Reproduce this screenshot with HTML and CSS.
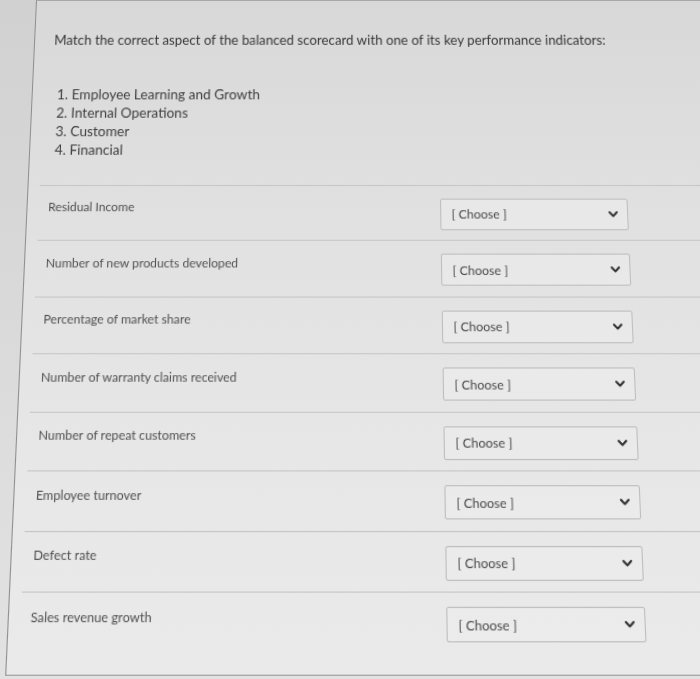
FILE: index.html
```html
<!DOCTYPE html>
<html lang="en">
<head>
<meta charset="utf-8">
<title>Balanced scorecard matching</title>
<link rel="stylesheet" href="styles.css">
</head>
<body>
<div class="stage">
  <div class="card">
    <p class="question">Match the correct aspect of the balanced scorecard with one of its key performance indicators:</p>
    <ol class="aspects">
      <li>Employee Learning and Growth</li>
      <li>Internal Operations</li>
      <li>Customer</li>
      <li>Financial</li>
    </ol>
    <div class="rows">
      <div class="row"><span class="label">Residual Income</span><div class="select"><span>[ Choose ]</span><svg class="chev" viewBox="0 0 9 6" width="9" height="6"><polyline points="1,1 4.5,4.6 8,1"/></svg></div></div>
      <div class="row"><span class="label">Number of new products developed</span><div class="select"><span>[ Choose ]</span><svg class="chev" viewBox="0 0 9 6" width="9" height="6"><polyline points="1,1 4.5,4.6 8,1"/></svg></div></div>
      <div class="row"><span class="label">Percentage of market share</span><div class="select"><span>[ Choose ]</span><svg class="chev" viewBox="0 0 9 6" width="9" height="6"><polyline points="1,1 4.5,4.6 8,1"/></svg></div></div>
      <div class="row"><span class="label">Number of warranty claims received</span><div class="select"><span>[ Choose ]</span><svg class="chev" viewBox="0 0 9 6" width="9" height="6"><polyline points="1,1 4.5,4.6 8,1"/></svg></div></div>
      <div class="row"><span class="label">Number of repeat customers</span><div class="select"><span>[ Choose ]</span><svg class="chev" viewBox="0 0 9 6" width="9" height="6"><polyline points="1,1 4.5,4.6 8,1"/></svg></div></div>
      <div class="row"><span class="label">Employee turnover</span><div class="select"><span>[ Choose ]</span><svg class="chev" viewBox="0 0 9 6" width="9" height="6"><polyline points="1,1 4.5,4.6 8,1"/></svg></div></div>
      <div class="row"><span class="label">Defect rate</span><div class="select"><span>[ Choose ]</span><svg class="chev" viewBox="0 0 9 6" width="9" height="6"><polyline points="1,1 4.5,4.6 8,1"/></svg></div></div>
      <div class="row"><span class="label">Sales revenue growth</span><div class="select"><span>[ Choose ]</span><svg class="chev" viewBox="0 0 9 6" width="9" height="6"><polyline points="1,1 4.5,4.6 8,1"/></svg></div></div>
    </div>
  </div>
</div>
</body>
</html>
```
FILE: styles.css
```css
html, body {
  margin: 0;
  padding: 0;
  width: 700px;
  height: 679px;
  overflow: hidden;
}

body {
  background: linear-gradient(180deg, #d1d1d1 0%, #dcdcdc 60%, #e2e2e2 100%);
}

.stage {
  width: 760px;
  transform-origin: 337px 0;
  transform: perspective(1000px) rotateX(8.63deg);
  font-family: Lato, "Open Sans", sans-serif;
}

.card {
  margin-left: 36px;
  width: 720px;
  box-sizing: border-box;
  border: 1px solid #a8a8a8;
  border-left-color: #8e8e8e;
  border-right: none;
  background: linear-gradient(180deg, #d8d8d8 0%, #e1e1e1 35%, #e7e7e7 70%, #eaeaea 100%);
  padding: 30.7px 0 17px 0;
}

.question {
  margin: 0;
  padding-left: 19px;
  font-size: 13.25px;
  line-height: 17px;
  color: #383838;
}

.aspects {
  margin: 36px 0 0 0;
  padding-left: 24px;
  list-style-position: inside;
  font-size: 13.5px;
  line-height: 18px;
  color: #404040;
}

.rows {
  margin: 25.3px 0 0 11px;
}

.row {
  display: flex;
  align-items: flex-start;
  border-top: 1px solid #c6c6c6;
  padding: 12px 0 9.5px 9px;
}

.label {
  width: 380px;
  flex: none;
  margin-top: 0.5px;
  font-size: 11.75px;
  line-height: 15px;
  color: #505050;
}

.select {
  width: 182px;
  height: 30px;
  box-sizing: border-box;
  border: 1px solid #bdbdbd;
  border-radius: 2px;
  background: rgba(236, 236, 236, 0.6);
  display: flex;
  align-items: center;
  justify-content: space-between;
  padding: 0 9px 0 10px;
  font-size: 12px;
  color: #4a4a4a;
}

.chev {
  fill: none;
  stroke: #2e2e2e;
  stroke-width: 1.9;
  stroke-linecap: round;
  stroke-linejoin: round;
}
```
